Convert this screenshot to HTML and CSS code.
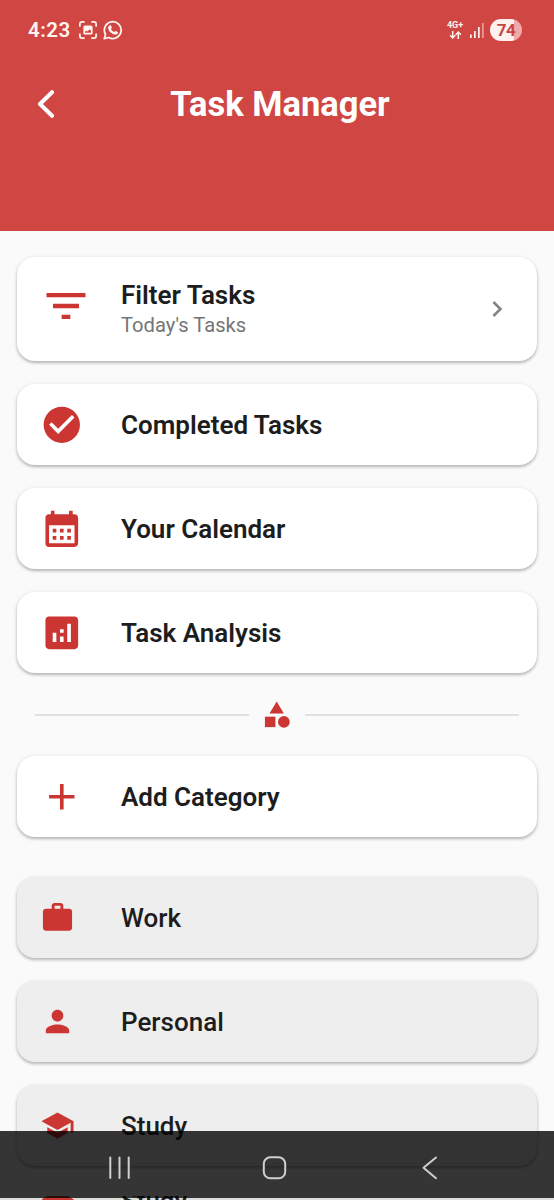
FILE: index.html
```html
<!DOCTYPE html>
<html lang="en">
<head>
<meta charset="utf-8">
<title>Task Manager</title>
<link rel="stylesheet" href="styles.css">
</head>
<body>
<div class="screen">
  <header class="header">
    <div class="status">
      <span class="time">4:23</span>
      <svg class="capture" viewBox="0 0 18 18" fill="none" stroke="currentColor" stroke-width="1.7" stroke-linecap="round">
        <path d="M.9 5V3Q.9.9 3 .9H5M13 .9h2Q17.1.9 17.1 3v2M17.1 13v2q0 2.1-2.1 2.1h-2M5 17.1H3Q.9 17.1.9 15v-2"/>
        <path fill="currentColor" stroke="none" fill-rule="evenodd" d="M6 4.400h6q1.600 0 1.600 1.600v6q0 1.600-1.600 1.600H6Q4.400 13.600 4.400 12V6Q4.400 4.400 6 4.400zM6 11.800h6V9.600L10.500 8.600 8.500 10.400 7.300 9.800 6 10.800z"/>
      </svg>
      <svg class="chat" viewBox="0 0 20 20" fill="none" stroke="currentColor" stroke-width="1.800">
        <path d="M1.300 18.700 2.500 14.300A8.400 8.400 0 1 1 5.800 17.500Z" stroke-linejoin="round"/>
        <path fill="currentColor" stroke="none" d="M6.700 5.200h.8c.3 0 .4.200.6.600l.7 1.700c.1.300 0 .5-.9 1.500.8 1.500 1.900 2.500 3.400 3.100.9-1.100 1-1.200 1.400-1l1.900.9c.3.200.4.200.3.700-.2 1.300-1.300 1.900-2.500 1.900-3.500-.4-6.600-3.300-7.200-6.200-.2-1.500.6-2.900 1.500-3.200z"/>
      </svg>
      <span class="spacer"></span>
      <span class="network"><span>4G+</span>
        <svg viewBox="0 0 12 8" fill="none" stroke="currentColor" stroke-width="1.500"><path d="M3.200 0v6.800M.6 4.200l2.600 2.700 2.600-2.700M8.800 8V1.200M6.200 3.800l2.600-2.700 2.600 2.700"/></svg>
      </span>
      <svg class="signal" viewBox="0 0 14 15" fill="currentColor"><path d="M0 11.500h1.700V15H0zM4 8h1.700v7H4zM8 4h1.700v11H8z"/><path opacity=".5" d="M12 0h1.700v15H12z"/></svg>
      <span class="battery">74</span>
    </div>
    <div class="titlebar">
      <svg class="back" viewBox="0 0 18 28"><path d="M15 2.200 3 14 15 25.800" fill="none" stroke="currentColor" stroke-width="4" stroke-linecap="round" stroke-linejoin="round"/></svg>
      <h1>Task Manager</h1>
    </div>
  </header>

  <main class="content">
    <section class="list">
      <div class="card tall">
        <span class="lead"><svg class="filter" viewBox="0 0 24 24"><path d="M10 18h4v-2h-4v2zM3 6v2h18V6H3zm3 7h12v-2H6v2z"/></svg></span>
        <div class="label"><div class="name">Filter Tasks</div><div class="sub">Today's Tasks</div></div>
        <svg class="chevron" viewBox="0 0 24 24"><path d="M10 6 8.590 7.410 13.170 12l-4.580 4.590L10 18l6-6z"/></svg>
      </div>
      <div class="card single">
        <span class="lead"><svg viewBox="0 0 24 24"><path d="M12 2C6.480 2 2 6.480 2 12s4.480 10 10 10 10-4.480 10-10S17.520 2 12 2zm-2 15-5-5 1.410-1.410L10 14.170l7.590-7.590L19 8l-9 9z"/></svg></span>
        <div class="name">Completed Tasks</div>
      </div>
      <div class="card single">
        <span class="lead"><svg viewBox="0 0 24 24"><path fill-rule="evenodd" d="M19 4h-1V2h-2v2H8V2H6v2H5a2 2 0 0 0-2 2v14a2 2 0 0 0 2 2h14c1.100 0 2-.9 2-2V6c0-1.100-.9-2-2-2zm0 16H5V10h14v10zM7 12h2v2H7zM11 12h2v2h-2zM15 12h2v2h-2zM7 16h2v2H7zM11 16h2v2h-2zM15 16h2v2h-2z"/></svg></span>
        <div class="name">Your Calendar</div>
      </div>
      <div class="card single">
        <span class="lead"><svg viewBox="0 0 24 24"><path d="M19 3H5c-1.100 0-2 .9-2 2v14c0 1.100.9 2 2 2h14c1.100 0 2-.9 2-2V5c0-1.100-.9-2-2-2zM9 17H7v-5h2v5zm4 0h-2v-3h2v3zm0-5h-2v-2h2v2zm4 5h-2V7h2v10z"/></svg></span>
        <div class="name">Task Analysis</div>
      </div>
    </section>

    <div class="divider">
      <svg viewBox="0 0 24 24"><path d="m12 2-5.500 9h11z"/><circle cx="17.500" cy="17.500" r="4.500"/><path d="M3 13.500h8v8H3z"/></svg>
    </div>

    <div class="card single">
      <span class="lead"><svg viewBox="0 0 24 24"><path d="M19 13h-6v6h-2v-6H5v-2h6V5h2v6h6v2z"/></svg></span>
      <div class="name">Add Category</div>
    </div>

    <section class="list categories">
      <div class="card category">
        <span class="lead"><svg viewBox="0 0 24 24"><path d="M20 6h-4V4c0-1.110-.89-2-2-2h-4c-1.110 0-2 .89-2 2v2H4c-1.110 0-2 .89-2 2v11c0 1.110.89 2 2 2h16c1.110 0 2-.89 2-2V8c0-1.110-.89-2-2-2zm-6 0h-4V4h4v2z"/></svg></span>
        <div class="name">Work</div>
      </div>
      <div class="card category">
        <span class="lead"><svg viewBox="0 0 24 24"><path d="M12 12c2.210 0 4-1.790 4-4s-1.790-4-4-4-4 1.790-4 4 1.790 4 4 4zm0 2c-2.670 0-8 1.340-8 4v2h16v-2c0-2.660-5.330-4-8-4z"/></svg></span>
        <div class="name">Personal</div>
      </div>
      <div class="card category">
        <span class="lead"><svg viewBox="0 0 24 24"><path d="M5 13.180v4L12 21l7-3.820v-4L12 17l-7-3.820zM12 3 1 9l11 6 9-4.910V17h2V9L12 3z"/></svg></span>
        <div class="name">Study</div>
      </div>
    </section>
  </main>

  <div class="peek">
    <span class="lead"><svg viewBox="0 0 24 24"><path d="M5 13.180v4L12 21l7-3.820v-4L12 17l-7-3.820zM12 3 1 9l11 6 9-4.910V17h2V9L12 3z"/></svg></span>
    <div class="name">Study</div>
  </div>

  <nav class="navbar">
    <svg viewBox="0 0 554 67" fill="none" stroke="#cfcfcf" stroke-width="2" stroke-linecap="round">
      <path d="M110.300 26.500v20.500M119.500 26.500v20.500M128.700 26.500v20.500"/>
      <rect x="263.800" y="26.300" width="21.400" height="21" rx="6.500"/>
      <path d="M436 26.500 423.500 36.700 436 47.200" stroke-linejoin="round"/>
    </svg>
  </nav>
</div>
</body>
</html>
```
FILE: styles.css
```css
* { box-sizing: border-box; }
body { margin: 0; background: #fafafa; font-family: Roboto, "Liberation Sans", sans-serif; }
svg { display: block; flex: none; }

.screen { position: relative; width: 554px; height: 1200px; overflow: hidden; background: #fafafa; }

.header { height: 231px; background: #cf4643; color: #fff; }
.status { display: flex; align-items: center; height: 60px; padding: 0 32px 0 28px; color: #fff4ee; }
.time { width: 51px; font-size: 20.500px; font-weight: 600; letter-spacing: .5px; }
.capture { width: 18px; height: 18px; }
.chat { width: 20px; height: 20px; margin-left: 6px; }
.spacer { flex: 1; }
.network { display: flex; flex-direction: column; align-items: center; width: 18px; font-size: 9px; font-weight: 700; line-height: 9px; }
.network svg { width: 13px; height: 8px; margin-top: 1px; }
.signal { width: 14px; height: 15px; margin: 0 6px 0 6px; }
.battery { width: 32px; height: 22px; border-radius: 11px; background: linear-gradient(90deg, #fff1ef 24px, #f1aaa8 24px); color: #c84541; font-size: 17px; font-weight: 700; line-height: 22px; text-align: center; letter-spacing: -.6px; }

.titlebar { display: grid; grid-template-columns: 72px 1fr 66px; align-items: center; height: 88px; }
.back { width: 18px; height: 28px; margin-left: 37px; }
h1 { margin: 0; font-size: 34.500px; line-height: 40px; font-weight: 700; text-align: center; }

.content { padding: 26px 17px 0; }
.list { display: flex; flex-direction: column; gap: 23px; }
.card { display: flex; align-items: center; height: 81px; border-radius: 18px; background: #fff; box-shadow: 0 2px 3px rgba(0, 0, 0, .2), 0 1px 4px rgba(0, 0, 0, .13); }
.tall { height: 104px; }
.lead { flex: none; width: 104px; padding-left: 23px; }
.lead svg { width: 43.600px; height: 43.600px; fill: #cb3632; }
.lead .filter { width: 52px; height: 52px; margin: -7px 0 0; }
.name { font-size: 26px; line-height: 31px; font-weight: 600; color: #1d1d1d; white-space: nowrap; }
.single .name { padding-top: 2px; }
.label { flex: 1; margin-top: -1px; }
.sub { margin-top: 1px; font-size: 20.200px; line-height: 26px; color: #757575; }
.chevron { width: 32px; height: 32px; margin-right: 24px; fill: #858585; }

.divider { display: flex; align-items: center; gap: 12px; height: 83px; padding: 0 18px; }
.divider::before, .divider::after { content: ""; flex: 1; height: 2px; background: #e0e0e0; }
.divider svg { width: 31.400px; height: 31.400px; fill: #cb3632; }

.categories { margin-top: 40px; }
.category { background: #eee; }
.category .name { padding-top: 1px; }
.category .name, .peek .name { font-weight: 500; }
.category .lead svg, .peek .lead svg { width: 35px; height: 35px; }

/* sliver of the next row, visible below the system bar */
.peek { position: absolute; inset: auto 0 0; display: flex; height: 4px; padding-left: 17px; overflow: hidden; background: linear-gradient(#fafafa 2px, #ddd 2px); }
.peek .lead svg { margin-top: -10px; }
.peek .name { margin-top: -10px; }

.navbar { position: absolute; inset: auto 0 2px; height: 67px; background: rgba(0, 0, 0, .79); }
```
